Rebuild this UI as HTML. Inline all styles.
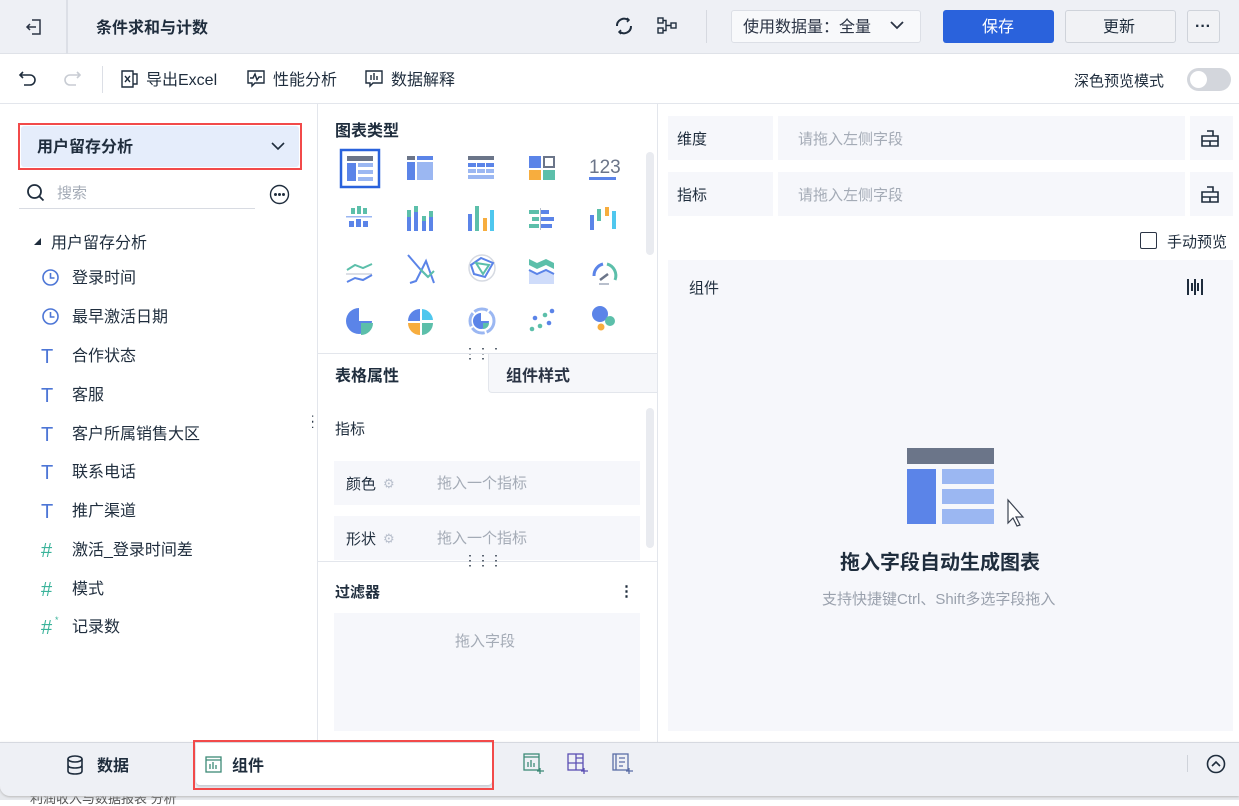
<!DOCTYPE html>
<html><head><meta charset="utf-8"><style>
*{box-sizing:border-box;margin:0;padding:0}
body{width:1239px;height:800px;overflow:hidden;position:relative;background:#fff;font-family:"Liberation Sans","Noto Sans CJK SC",sans-serif;color:#1f2d3d;font-size:15px}
.a{position:absolute}
.t{position:absolute;white-space:nowrap;line-height:1;margin-top:2px}
svg{position:absolute;overflow:visible}
.T{font-size:20px;color:#4d76d6;font-weight:300}
.H{font-size:20px;color:#3ab39a}
</style></head><body>
<!-- top bar -->
<div class="a" style="left:0;top:0;width:1239px;height:54px;background:#eef0f5;border-bottom:1px solid #dfe2e8"></div>
<div class="a" style="left:66px;top:0;width:2px;height:54px;background:#dcdfe6"></div>
<svg style="left:24px;top:17px" width="20" height="20" viewBox="0 0 20 20" fill="none" stroke="#2b3445" stroke-width="1.5"><path d="M8 3h8v14H8M3 10h9M6 7l-3 3 3 3"/></svg>
<div class="t" style="left:96px;top:19px;font-size:16px;font-weight:bold">条件求和与计数</div>
<svg style="left:613px;top:15px" width="22" height="22" viewBox="0 0 22 22" fill="none" stroke="#1f2d3d" stroke-width="2"><path d="M4 11a7 7 0 0 1 11-6M18 11a7 7 0 0 1-11 6"/><path d="M14 3l2 2-2 2M8 15l-2 2 2 2" stroke-width="1.5"/></svg>
<svg style="left:657px;top:16px" width="22" height="20" viewBox="0 0 22 20" fill="none" stroke="#1f2d3d" stroke-width="1.4"><rect x="1" y="2" width="5" height="5"/><rect x="1" y="12" width="5" height="5"/><rect x="14" y="7" width="5" height="5"/><path d="M6 4.5h3v10H6M9 9.5h5"/></svg>
<div class="a" style="left:706px;top:10px;width:1px;height:33px;background:#d6d9e0"></div>
<div class="a" style="left:731px;top:10px;width:190px;height:33px;background:#f8f9fb;border:1px solid #dcdfe6;border-radius:3px"></div>
<div class="t" style="left:743px;top:18px;font-size:16px;color:#2b3445">使用数据量：全量</div>
<svg style="left:889px;top:20px" width="16" height="12" viewBox="0 0 16 12" fill="none" stroke="#2b3445" stroke-width="1.8"><path d="M2 2l6 6 6-6"/></svg>
<div class="a" style="left:943px;top:10px;width:111px;height:33px;background:#2a62dc;border-radius:3px"></div>
<div class="t" style="left:982px;top:18px;font-size:16px;color:#fff">保存</div>
<div class="a" style="left:1065px;top:10px;width:111px;height:33px;background:#f1f2f5;border:1px solid #cfd3da;border-radius:3px"></div>
<div class="t" style="left:1103px;top:18px;font-size:16px;color:#1f2d3d">更新</div>
<div class="a" style="left:1187px;top:10px;width:33px;height:33px;background:#f1f2f5;border:1px solid #cfd3da;border-radius:3px"></div>
<div class="t" style="left:1195px;top:17px;font-size:16px;font-weight:bold">···</div>
<!-- toolbar -->
<div class="a" style="left:0;top:103px;width:1239px;height:1px;background:#e3e6ec"></div>
<svg style="left:18px;top:69px" width="20" height="18" viewBox="0 0 20 18" fill="none" stroke="#1f2d3d" stroke-width="1.6"><path d="M5 3L2 6l3 3M2 6h10a5 5 0 0 1 0 10H6"/></svg>
<svg style="left:62px;top:69px" width="20" height="18" viewBox="0 0 20 18" fill="none" stroke="#c8ccd3" stroke-width="1.6"><path d="M15 3l3 3-3 3M18 6H8a5 5 0 0 0 0 10h6"/></svg>
<div class="a" style="left:102px;top:66px;width:1px;height:27px;background:#dcdfe6"></div>
<svg style="left:121px;top:70px" width="18" height="18" viewBox="0 0 18 18" fill="none" stroke="#1f2d3d" stroke-width="1.4"><path d="M1 1h11v16H1zM12 4h4v10h-4"/><path d="M4 6l5 6M9 6l-5 6"/></svg>
<div class="t" style="left:146px;top:71px;font-size:16px">导出Excel</div>
<svg style="left:247px;top:70px" width="18" height="18" viewBox="0 0 18 18" fill="none" stroke="#1f2d3d" stroke-width="1.4"><path d="M1 1h16v12H8l-3 3v-3H1z"/><path d="M3 8h3l2-4 2 6 2-3h3"/></svg>
<div class="t" style="left:273px;top:71px;font-size:16px">性能分析</div>
<svg style="left:365px;top:70px" width="18" height="18" viewBox="0 0 18 18" fill="none" stroke="#1f2d3d" stroke-width="1.4"><path d="M1 1h16v12H8l-3 3v-3H1z"/><path d="M6 5v5M9 3v7M12 6v4"/></svg>
<div class="t" style="left:391px;top:71px;font-size:16px">数据解释</div>
<div class="t" style="left:1074px;top:72px;font-size:15px">深色预览模式</div>
<div class="a" style="left:1187px;top:68px;width:44px;height:23px;background:#d3d6dc;border-radius:12px"></div>
<div class="a" style="left:1190px;top:71px;width:17px;height:17px;background:#fff;border-radius:50%"></div>
<!-- left panel -->
<div class="a" style="left:317px;top:104px;width:1px;height:639px;background:#e3e6ec"></div>
<div class="a" style="left:18px;top:123px;width:284px;height:47px;border:2px solid #f24a4a"></div>
<div class="a" style="left:21px;top:126px;width:278px;height:41px;background:#e5edfb;border-radius:3px"></div>
<div class="t" style="left:37px;top:138px;font-size:16px;font-weight:bold">用户留存分析</div>
<svg style="left:270px;top:141px" width="16" height="10" viewBox="0 0 16 10" fill="none" stroke="#1f2d3d" stroke-width="1.6"><path d="M2 2l6 6 6-6"/></svg>
<svg style="left:26px;top:183px" width="20" height="20" viewBox="0 0 20 20" fill="none" stroke="#1f2d3d" stroke-width="1.8"><circle cx="8.5" cy="8.5" r="6.5"/><path d="M13.5 13.5l4 4"/></svg>
<div class="t" style="left:57px;top:184px;font-size:15px;color:#a4abb6">搜索</div>
<div class="a" style="left:19px;top:208px;width:236px;height:1px;background:#d8dbe2"></div>
<svg style="left:269px;top:184px" width="21" height="21" viewBox="0 0 21 21" fill="none" stroke="#1f2d3d" stroke-width="1.4"><circle cx="10.5" cy="10.5" r="9"/><circle cx="6.5" cy="10.5" r=".8" fill="#1f2d3d"/><circle cx="10.5" cy="10.5" r=".8" fill="#1f2d3d"/><circle cx="14.5" cy="10.5" r=".8" fill="#1f2d3d"/></svg>
<svg style="left:34px;top:238px" width="7" height="7" viewBox="0 0 7 7"><path d="M0 7h7V0z" fill="#1f2d3d"/></svg>
<div class="t" style="left:51px;top:234px;font-size:16px">用户留存分析</div>
<svg style="left:41px;top:268px" width="19" height="19" viewBox="0 0 19 19" fill="none" stroke="#4d76d6" stroke-width="1.6"><circle cx="9.5" cy="9.5" r="7.5"/><path d="M9.5 5v5h4"/></svg>
<svg style="left:41px;top:307px" width="19" height="19" viewBox="0 0 19 19" fill="none" stroke="#4d76d6" stroke-width="1.6"><circle cx="9.5" cy="9.5" r="7.5"/><path d="M9.5 5v5h4"/></svg>
<div class="t" style="left:72px;top:269px;font-size:16px">登录时间</div>
<div class="t" style="left:72px;top:308px;font-size:16px">最早激活日期</div>
<div class="t T" style="left:41px;top:345px">T</div>
<div class="t" style="left:72px;top:347px;font-size:16px">合作状态</div>
<div class="t T" style="left:41px;top:384px">T</div>
<div class="t" style="left:72px;top:386px;font-size:16px">客服</div>
<div class="t T" style="left:41px;top:423px">T</div>
<div class="t" style="left:72px;top:425px;font-size:16px">客户所属销售大区</div>
<div class="t T" style="left:41px;top:461px">T</div>
<div class="t" style="left:72px;top:463px;font-size:16px">联系电话</div>
<div class="t T" style="left:41px;top:500px">T</div>
<div class="t" style="left:72px;top:502px;font-size:16px">推广渠道</div>
<div class="t H" style="left:41px;top:539px">#</div>
<div class="t" style="left:72px;top:541px;font-size:16px">激活_登录时间差</div>
<div class="t H" style="left:41px;top:578px">#</div>
<div class="t" style="left:72px;top:580px;font-size:16px">模式</div>
<div class="t H" style="left:41px;top:616px">#</div>
<div class="t" style="left:55px;top:614px;font-size:9px;color:#3ab39a">*</div>
<div class="t" style="left:72px;top:618px;font-size:16px">记录数</div>
<div class="t" style="left:311px;top:413px;font-size:12px;line-height:6px;width:10px">:<br>:</div>
<!-- middle -->
<div class="a" style="left:657px;top:104px;width:1px;height:639px;background:#e3e6ec"></div>
<div class="t" style="left:335px;top:122px;font-size:16px;font-weight:bold">图表类型</div>
<div class="a" style="left:646px;top:152px;width:8px;height:103px;background:#e9ebf0;border-radius:4px"></div>
<svg style="left:318px;top:145px" width="330" height="200" viewBox="0 0 330 200">
<g transform="translate(23,5)"><rect x="0" y="0" width="38" height="37" fill="none" stroke="#2a62dc" stroke-width="2.5"/><rect x="6" y="6" width="26" height="5" fill="#6b7589"/><rect x="6" y="13" width="9" height="18" fill="#5b84e8"/><rect x="17" y="13" width="15" height="4" fill="#9bb7f2"/><rect x="17" y="20" width="15" height="4" fill="#9bb7f2"/><rect x="17" y="27" width="15" height="4" fill="#9bb7f2"/></g>
<g transform="translate(89,11)"><rect width="8" height="4" fill="#6b7589"/><rect x="10" width="16" height="4" fill="#5b84e8"/><rect y="6" width="8" height="18" fill="#5b84e8"/><rect x="10" y="6" width="16" height="18" fill="#9bb7f2"/></g>
<g transform="translate(150,11)"><rect width="26" height="4" fill="#6b7589"/><rect y="7" width="8" height="4" fill="#5b84e8"/><rect x="9" y="7" width="8" height="4" fill="#5b84e8"/><rect x="18" y="7" width="8" height="4" fill="#5b84e8"/><rect y="13" width="8" height="4" fill="#9bb7f2"/><rect x="9" y="13" width="8" height="4" fill="#9bb7f2"/><rect x="18" y="13" width="8" height="4" fill="#9bb7f2"/><rect y="19" width="26" height="4" fill="#9bb7f2"/></g>
<g transform="translate(211,11)"><rect width="12" height="12" fill="#5b84e8"/><rect x="15" y="1" width="10" height="10" fill="none" stroke="#6b7589" stroke-width="2"/><rect y="14" width="12" height="10" fill="#f7ad3e"/><rect x="14" y="14" width="12" height="10" fill="#5cbfaa"/></g>
<text x="271" y="28" font-size="19" fill="#6b7589" font-family="Liberation Sans">123</text><rect x="271" y="32" width="27" height="3" fill="#5b84e8"/>
<g transform="translate(0,3)">
<g transform="translate(28,60)"><rect x="5" width="4" height="6" fill="#5cbfaa"/><rect x="11" y="-2" width="4" height="8" fill="#5cbfaa"/><rect x="17" width="4" height="6" fill="#5cbfaa"/><rect y="8" width="26" height="1.5" fill="#9bb7f2"/><rect x="3" y="13" width="5" height="6" fill="#5b84e8"/><rect x="10" y="11" width="5" height="8" fill="#5b84e8"/><rect x="17" y="13" width="5" height="6" fill="#5b84e8"/></g>
<g transform="translate(89,58)"><rect width="4" height="21" y="4" fill="#5b84e8"/><rect width="4" height="7" y="4" fill="#5cbfaa"/><rect x="7" width="4" height="25" fill="#5b84e8"/><rect x="7" width="4" height="6" fill="#5cbfaa"/><rect x="15" y="10" width="4" height="15" fill="#5b84e8"/><rect x="15" y="10" width="4" height="5" fill="#5cbfaa"/><rect x="22" y="5" width="4" height="20" fill="#5b84e8"/><rect x="22" y="5" width="4" height="6" fill="#5cbfaa"/></g>
<g transform="translate(150,58)"><rect y="8" width="4" height="17" fill="#5b84e8"/><rect x="7" width="4" height="25" fill="#5cbfaa"/><rect x="15" y="12" width="4" height="13" fill="#f7ad3e"/><rect x="22" y="4" width="4" height="21" fill="#4fc7ee"/></g>
<g transform="translate(211,62)"><rect width="10" height="4" fill="#5cbfaa"/><rect x="12" width="8" height="4" fill="#5b84e8"/><rect x="3" y="7" width="7" height="4" fill="#5cbfaa"/><rect x="12" y="7" width="13" height="4" fill="#5b84e8"/><rect y="14" width="10" height="4" fill="#5cbfaa"/><rect x="12" y="14" width="11" height="4" fill="#5b84e8"/><rect x="11" y="-2" width="1" height="22" fill="#b8bfcc"/></g>
<g transform="translate(272,59)"><rect y="8" width="4" height="15" fill="#5b84e8"/><rect x="7" y="2" width="4" height="12" fill="#5cbfaa"/><rect x="15" width="4" height="9" fill="#f7ad3e"/><rect x="22" y="4" width="4" height="18" fill="#4fc7ee"/></g>
</g>
<g fill="none" stroke-width="2">
<path d="M29 125l8-5 8 3 9-4" stroke="#5cbfaa"/><path d="M28 129h26" stroke="#b8bfcc" stroke-width="1"/><path d="M29 137l8-4 8 2 9-5" stroke="#5b84e8"/>
<path d="M90 110l12 14 8 8 M92 138l6-2 10-20 8 22" stroke="#5b84e8"/><path d="M102 124l8 8 6-6" stroke="#5cbfaa"/>
<circle cx="164" cy="123" r="13" stroke="#d6dae2" stroke-width="1.5"/><path d="M153 120l10-7 12 5-8 14-11-3z" stroke="#5b84e8"/><path d="M158 118l13 2-6 9z" stroke="#5cbfaa"/>
</g>
<path d="M211 114l8 4 9-4 8 4v6l-8-4-9 4-8-4z" fill="#5cbfaa"/><path d="M211 125l8 4 9-4 8 4v10h-25z" fill="#cfdcfa"/><path d="M211 125l8 4 9-4 8 4" stroke="#5b84e8" stroke-width="2" fill="none"/>
<path d="M276 131a12 12 0 0 1 9-12" stroke="#5b84e8" stroke-width="3" fill="none"/><path d="M289 119a12 12 0 0 1 8 16" stroke="#5cbfaa" stroke-width="3" fill="none"/><path d="M282 135l8-6" stroke="#6b7589" stroke-width="2.5"/><rect x="281" y="138" width="10" height="2" fill="#b8bfcc"/>
<path d="M41 163a13 13 0 1 0 13 13H41z" fill="#5b84e8"/><path d="M43 178h12a12 12 0 0 1-12 12z" fill="#5cbfaa"/>
<path d="M102 176h-12a12 12 0 0 1 12-12z" fill="#5b84e8"/><path d="M104 164a12 12 0 0 1 11 11h-11z" fill="#4fc7ee"/><path d="M102 178v12a12 12 0 0 1-12-12z" fill="#f7ad3e"/><path d="M104 178h11a12 12 0 0 1-11 12z" fill="#5cbfaa"/>
<circle cx="164" cy="176" r="12" fill="none" stroke="#9bb7f2" stroke-width="3" stroke-dasharray="14 2"/><path d="M163 168a8 8 0 1 0 8 8h-8z" fill="#5b84e8"/><path d="M165 178h6a6 6 0 0 1-6 6z" fill="#5cbfaa"/>
<g fill="#5b84e8"><circle cx="217" cy="173" r="2.3"/><circle cx="234" cy="166" r="2.3"/><circle cx="231" cy="178" r="2.3"/></g><g fill="#5cbfaa"><circle cx="227" cy="170" r="2.3"/><circle cx="214" cy="184" r="2.3"/><circle cx="222" cy="181" r="2.3"/></g>
<circle cx="282" cy="169" r="8" fill="#5b84e8"/><circle cx="292" cy="176" r="5" fill="#5cbfaa"/><circle cx="283" cy="182" r="3.5" fill="#f7ad3e"/>
</svg>
<div class="t" style="left:463px;top:344px;font-size:14px;letter-spacing:-1px">⋮⋮⋮</div>
<div class="a" style="left:318px;top:353px;width:339px;height:1px;background:#e3e6ec"></div>
<div class="a" style="left:488px;top:354px;width:169px;height:39px;background:#f6f7fa;border-left:1px solid #e3e6ec;border-bottom:1px solid #e3e6ec;border-bottom-left-radius:4px"></div>
<div class="t" style="left:335px;top:367px;font-size:16px;font-weight:bold">表格属性</div>
<div class="t" style="left:506px;top:367px;font-size:16px;font-weight:bold;color:#2b3445">组件样式</div>
<div class="a" style="left:646px;top:408px;width:8px;height:140px;background:#e9ebf0;border-radius:4px"></div>
<div class="t" style="left:335px;top:420px;font-size:15px">指标</div>
<div class="a" style="left:334px;top:461px;width:306px;height:44px;background:#f6f7fb"></div>
<div class="t" style="left:346px;top:475px;font-size:15px">颜色</div>
<div class="t" style="left:383px;top:475px;font-size:13px;color:#b8bfcc">⚙</div>
<div class="t" style="left:437px;top:474px;font-size:15px;color:#a4abb6">拖入一个指标</div>
<div class="a" style="left:334px;top:516px;width:306px;height:44px;background:#f6f7fb"></div>
<div class="t" style="left:346px;top:530px;font-size:15px">形状</div>
<div class="t" style="left:383px;top:530px;font-size:13px;color:#b8bfcc">⚙</div>
<div class="t" style="left:437px;top:529px;font-size:15px;color:#a4abb6">拖入一个指标</div>
<div class="a" style="left:318px;top:561px;width:339px;height:1px;background:#e3e6ec"></div>
<div class="t" style="left:463px;top:551px;font-size:14px;letter-spacing:-1px">⋮⋮⋮</div>
<div class="t" style="left:335px;top:583px;font-size:15px;font-weight:bold">过滤器</div>
<div class="t" style="left:619px;top:582px;font-size:15px;font-weight:bold">⋮</div>
<div class="a" style="left:334px;top:613px;width:306px;height:118px;background:#f6f7fb"></div>
<div class="t" style="left:455px;top:632px;font-size:15px;color:#a4abb6">拖入字段</div>
<!-- right -->
<div class="a" style="left:668px;top:116px;width:565px;height:44px;background:#f6f7fb"></div>
<div class="a" style="left:773px;top:116px;width:5px;height:44px;background:#fff"></div>
<div class="a" style="left:1185px;top:116px;width:5px;height:44px;background:#fff"></div>
<div class="t" style="left:677px;top:130px;font-size:15px">维度</div>
<div class="t" style="left:798px;top:130px;font-size:15px;color:#a4abb6">请拖入左侧字段</div>
<div class="a" style="left:668px;top:172px;width:565px;height:44px;background:#f6f7fb"></div>
<div class="a" style="left:773px;top:172px;width:5px;height:44px;background:#fff"></div>
<div class="a" style="left:1185px;top:172px;width:5px;height:44px;background:#fff"></div>
<div class="t" style="left:677px;top:186px;font-size:15px">指标</div>
<div class="t" style="left:798px;top:186px;font-size:15px;color:#a4abb6">请拖入左侧字段</div>
<svg style="left:1201px;top:130px" width="18" height="17" viewBox="0 0 18 17" fill="none" stroke="#1f2d3d" stroke-width="1.6"><path d="M6 1h6v5M1 6h16v10H1zM1 11h16M9 11v5"/></svg>
<svg style="left:1201px;top:186px" width="18" height="17" viewBox="0 0 18 17" fill="none" stroke="#1f2d3d" stroke-width="1.6"><path d="M6 1h6v5M1 6h16v10H1zM1 11h16M9 11v5"/></svg>
<div class="a" style="left:1140px;top:232px;width:17px;height:17px;border:1.5px solid #2b3445;border-radius:2px"></div>
<div class="t" style="left:1167px;top:233px;font-size:15px">手动预览</div>
<div class="a" style="left:668px;top:260px;width:565px;height:471px;background:#f6f7fb"></div>
<div class="t" style="left:689px;top:279px;font-size:15px">组件</div>
<svg style="left:1186px;top:278px" width="18" height="18" viewBox="0 0 18 18" fill="#1f2d3d"><rect x="1" y="1" width="2" height="16"/><rect x="5" y="5" width="2" height="8"/><rect x="8" y="1" width="2" height="16"/><rect x="11" y="5" width="2" height="8"/><rect x="15" y="1" width="2" height="16"/></svg>
<svg style="left:907px;top:448px" width="120" height="80" viewBox="0 0 120 80"><rect width="87" height="16" fill="#6b7589"/><rect y="21" width="29" height="55" fill="#5b84e8"/><rect x="35" y="21" width="52" height="15" fill="#9bb7f2"/><rect x="35" y="41" width="52" height="15" fill="#9bb7f2"/><rect x="35" y="61" width="52" height="15" fill="#9bb7f2"/><path d="M101 52v23l5-5 4 8 3-1-4-8h7z" fill="#fff" stroke="#3a4250" stroke-width="1.2"/></svg>
<div class="t" style="left:840px;top:551px;font-size:20px;font-weight:bold">拖入字段自动生成图表</div>
<div class="t" style="left:822px;top:590px;font-size:15px;color:#9aa1ad">支持快捷键Ctrl、Shift多选字段拖入</div>
<!-- bottom -->
<div class="a" style="left:0;top:789px;width:1239px;height:11px;background:#e6e8ec"></div>
<div class="t" style="left:30px;top:790px;font-size:13px;color:#555">利润收入与数据报表 分析</div>
<div class="a" style="left:0;top:742px;width:1239px;height:54px;background:#eef0f5;border-top:1px solid #d6d9e0;border-bottom-left-radius:10px;box-shadow:0 1px 2px #bbb"></div>
<svg style="left:66px;top:755px" width="18" height="20" viewBox="0 0 18 20" fill="none" stroke="#1f2d3d" stroke-width="1.6"><ellipse cx="9" cy="4" rx="7" ry="3"/><path d="M2 4v12c0 2 3 3 7 3s7-1 7-3V4M2 10c0 2 3 3 7 3s7-1 7-3"/></svg>
<div class="t" style="left:97px;top:757px;font-size:16px;font-weight:bold">数据</div>
<div class="a" style="left:196px;top:743px;width:296px;height:42px;background:#fff;box-shadow:0 2px 2px #c9ccd3;border-radius:0 0 4px 4px"></div>
<div class="a" style="left:193px;top:740px;width:301px;height:50px;border:2px solid #f24a4a"></div>
<svg style="left:205px;top:756px" width="17" height="17" viewBox="0 0 17 17" fill="none" stroke="#3d8a77" stroke-width="1.3"><rect x="1" y="1" width="15" height="15"/><path d="M1 4h15M5 13V8M8 13V6M11 13V9"/></svg>
<div class="t" style="left:232px;top:757px;font-size:16px;font-weight:bold">组件</div>
<svg style="left:523px;top:753px" width="22" height="22" viewBox="0 0 22 22" fill="none" stroke="#3d8a77" stroke-width="1.3"><rect x="1" y="1" width="15" height="16"/><path d="M1 4h15M5 14V9M8 14V7M11 14V10M17 15v6M14 18h7"/></svg>
<svg style="left:567px;top:753px" width="22" height="22" viewBox="0 0 22 22" fill="none" stroke="#5b4fb3" stroke-width="1.3"><rect x="1" y="1" width="15" height="16"/><path d="M1 10h15M9 1v16M9 5h7M17 15v6M14 18h7"/></svg>
<svg style="left:612px;top:753px" width="22" height="22" viewBox="0 0 22 22" fill="none" stroke="#5b6ea6" stroke-width="1.3"><rect x="1" y="1" width="15" height="16"/><path d="M4 1v16M7 5h6M7 9h6M7 13h4M17 15v6M14 18h7"/></svg>
<div class="a" style="left:1187px;top:755px;width:1px;height:17px;background:#cfd3da"></div>
<svg style="left:1206px;top:754px" width="20" height="20" viewBox="0 0 20 20" fill="none" stroke="#1f2d3d" stroke-width="1.6"><circle cx="10" cy="10" r="8.5"/><path d="M6 12l4-4 4 4"/></svg>
</body></html>
